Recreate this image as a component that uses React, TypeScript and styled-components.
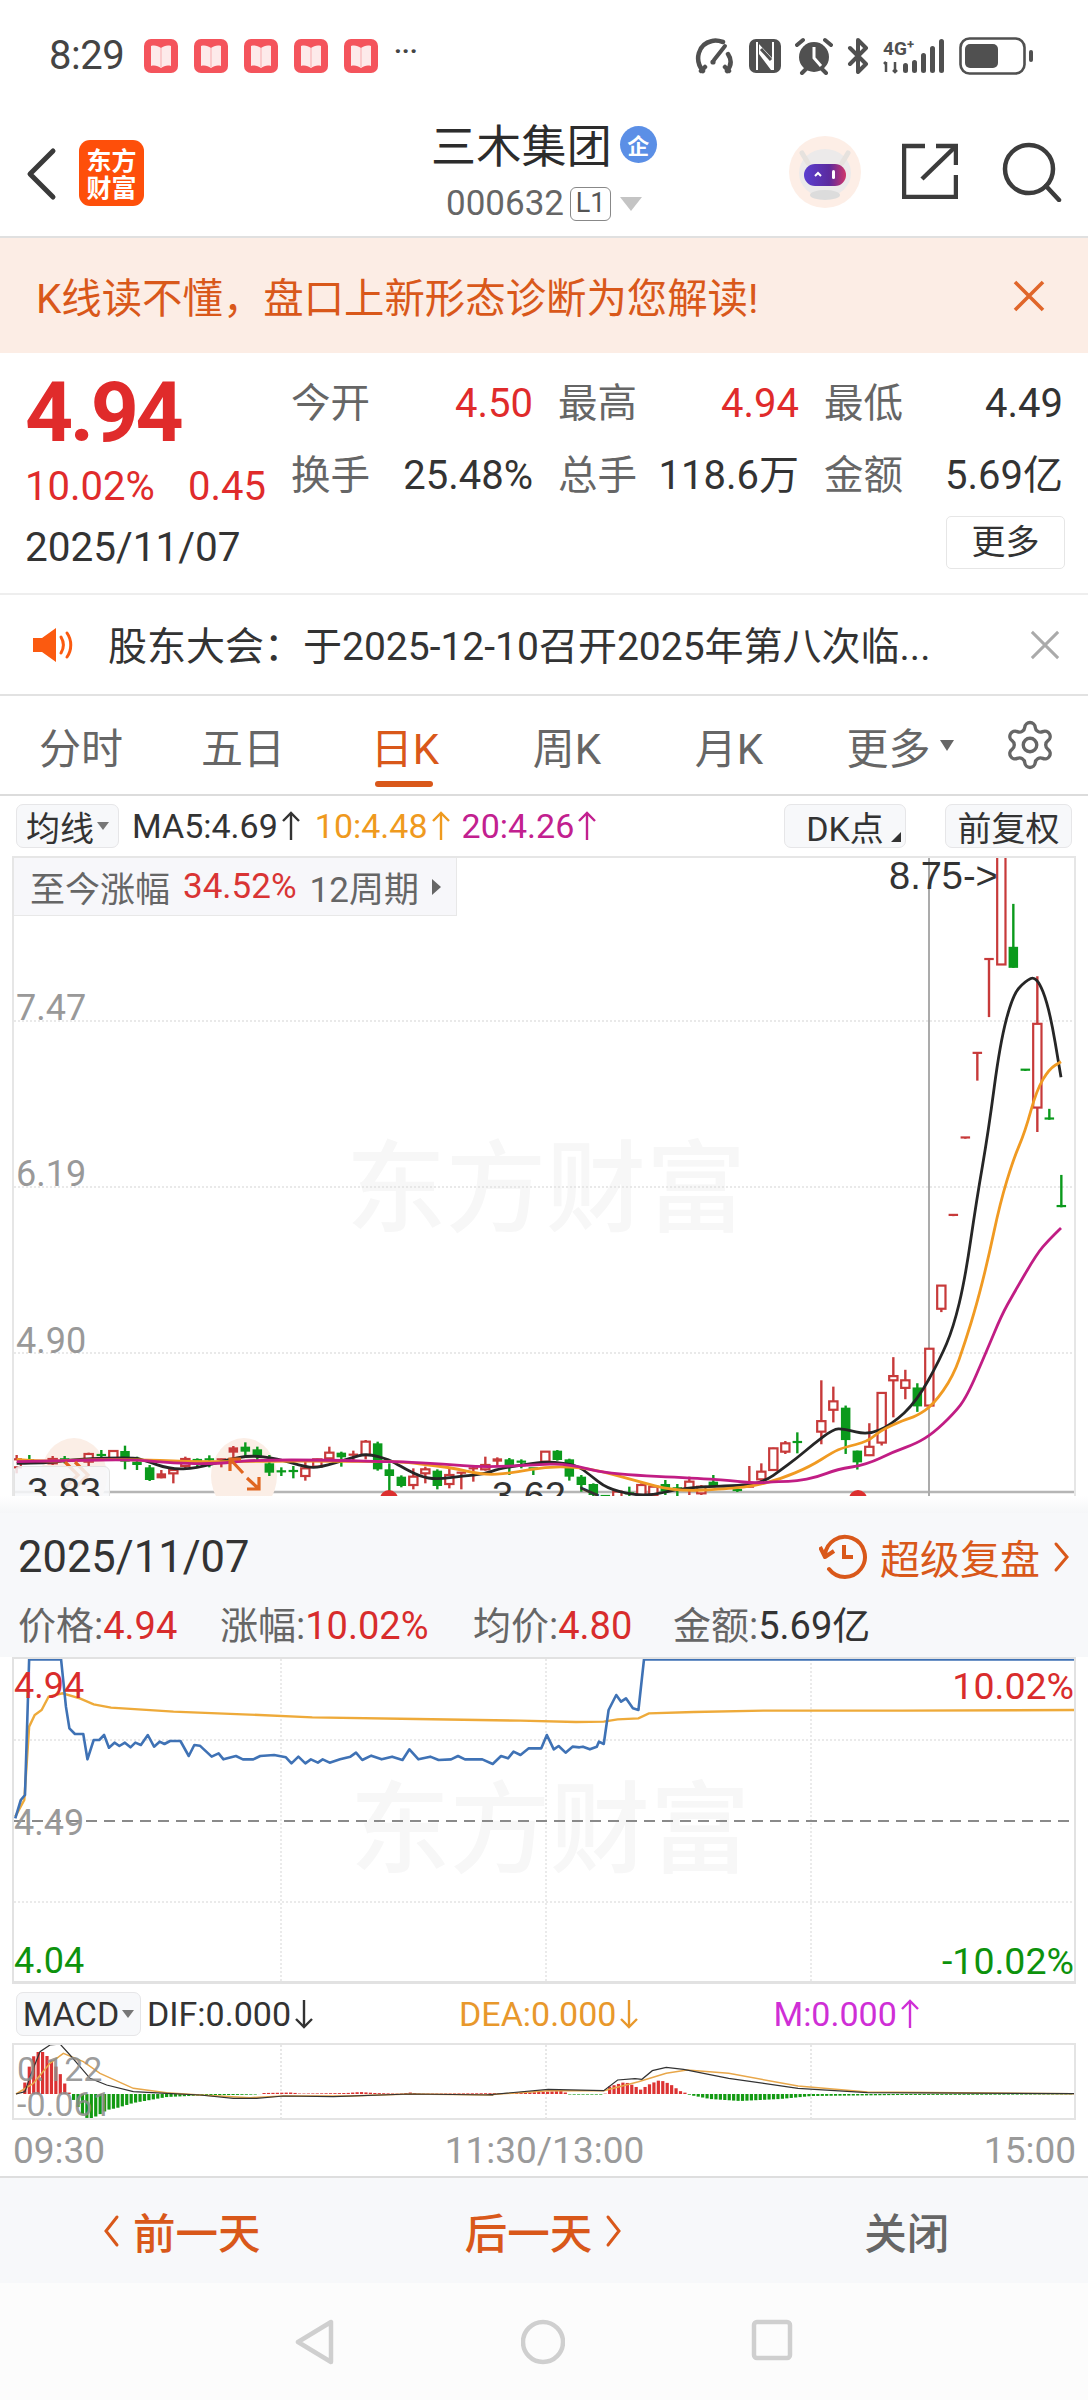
import React from "react";
import styled, { createGlobalStyle } from "styled-components";
import { Settings } from "lucide-react";

const FONT = `Roboto, "Noto Sans CJK SC", sans-serif`;
const RED = "#e02b2b";
const CANDLE_RED = "#c73a3a";
const CANDLE_GREEN = "#0b9a1c";
const ORANGE = "#d9581a";

const Global = createGlobalStyle`
  html, body { margin: 0; padding: 0; background: #fff; overflow: hidden; }
  body { font-family: ${FONT}; color: #333; }
  * { box-sizing: border-box; }
`;

const Page = styled.div`
  width: 1088px;
  height: 2400px;
  display: flex;
  flex-direction: column;
  overflow: hidden;
`;

/* status bar */
const StatusBar = styled.div`
  height: 110px;
  flex: none;
  display: flex;
  align-items: flex-start;
  padding: 36px 0 0 49px;
`;
const Clock = styled.span`
  font-size: 40px;
  line-height: 40px;
  color: #444;
  letter-spacing: -0.5px;
  width: 95px;
`;
const NoticeIcons = styled.div`
  display: flex;
  gap: 16px;
  margin-top: 3px;
`;
const Dots = styled.span`
  margin: 0 0 0 16px;
  font-size: 26px;
  line-height: 30px;
  color: #444;
  font-weight: 700;
  letter-spacing: 0;
`;
const StatusRight = styled.div`
  margin-left: auto;
  padding-right: 53px;
  display: flex;
  align-items: center;
  height: 40px;
  gap: 14px;
`;

/* nav */
const Nav = styled.div`
  height: 128px;
  flex: none;
  display: grid;
  grid-template-columns: 1fr auto 1fr;
  border-bottom: 2px solid #e0e0e0;
`;
const NavLeft = styled.div`
  display: flex;
  align-items: flex-start;
  padding: 30px 0 0 25px;
  gap: 22px;
`;
const Logo = styled.div`
  width: 65px;
  height: 66px;
  border-radius: 11px;
  background: #fe4f0a;
  color: #fff;
  font: 700 25px/27px "Noto Sans CJK SC", sans-serif;
  text-align: center;
  padding-top: 6px;
`;
const Title = styled.div`
  display: flex;
  flex-direction: column;
  align-items: center;
  padding-top: 12px;
`;
const TitleRow = styled.div`
  display: flex;
  align-items: center;
  font-size: 45px;
  line-height: 52px;
  color: #2c2c2c;
  gap: 8px;
  letter-spacing: 0.2px;
`;
const CorpBadge = styled.span`
  width: 37px;
  height: 37px;
  border-radius: 50%;
  background: #5b8fe6;
  color: #fff;
  font: 700 22px/37px "Noto Sans CJK SC", sans-serif;
  text-align: center;
  margin-top: -8px;
`;
const CodeRow = styled.div`
  display: flex;
  align-items: center;
  margin-top: 10px;
  font-size: 35px;
  line-height: 40px;
  color: #666;
`;
const LevelTag = styled.span`
  margin-left: 6px;
  width: 41px;
  height: 34px;
  border: 1.5px solid #888;
  border-radius: 6px;
  font-size: 27px;
  line-height: 30px;
  text-align: center;
  color: #555;
`;
const DownMark = styled.span`
  margin-left: 9px;
  width: 0;
  height: 0;
  border-left: 11px solid transparent;
  border-right: 11px solid transparent;
  border-top: 14px solid #c4c4c4;
`;
const NavRight = styled.div`
  display: flex;
  justify-content: flex-end;
  align-items: flex-start;
  padding: 25px 26px 0 0;
  gap: 41px;
`;

/* banner */
const Banner = styled.div`
  height: 115px;
  flex: none;
  background: #fcede5;
  display: flex;
  align-items: center;
  justify-content: space-between;
  padding: 0 43px 0 36px;
  color: ${ORANGE};
  font-size: 40.4px;
`;

/* quote */
const Quote = styled.div`
  height: 242px;
  flex: none;
  display: flex;
  padding: 0 23px 0 25px;
  border-bottom: 2px solid #eee;
`;
const QuoteLeft = styled.div`
  width: 266px;
  flex: none;
  display: flex;
  flex-direction: column;
`;
const BigPrice = styled.div`
  font-size: 84px;
  font-weight: 700;
  line-height: 84px;
  margin-top: 18px;
  color: ${RED};
  letter-spacing: -3.4px;
`;
const Changes = styled.div`
  display: flex;
  justify-content: space-between;
  width: 241px;
  margin-top: 10px;
  font-size: 40px;
  line-height: 44px;
  color: ${RED};
`;
const QuoteDate = styled.div`
  font-size: 40.5px;
  line-height: 44px;
  margin-top: 16px;
  color: #333;
`;
const QuoteRight = styled.div`
  flex: 1;
  display: flex;
  flex-direction: column;
`;
const StatGrid = styled.div`
  margin-top: 29px;
  display: grid;
  grid-template-columns: 242px 241px 239px;
  column-gap: 25px;
  row-gap: 28px;
`;
const Stat = styled.div`
  display: flex;
  justify-content: space-between;
  font-size: 40px;
  line-height: 44px;
`;
const StatLabel = styled.span`
  color: #666;
  font-size: 39.5px;
`;
const StatValue = styled.span<{ $red?: boolean }>`
  color: ${(p) => (p.$red ? RED : "#333")};
`;
const MoreButton = styled.div`
  align-self: flex-end;
  margin-top: 18px;
  width: 119px;
  height: 53px;
  border: 1.5px solid #e6e6e6;
  border-radius: 5px;
  font-size: 34px;
  line-height: 50px;
  text-align: center;
  color: #333;
`;

/* notice */
const Notice = styled.div`
  height: 101px;
  flex: none;
  display: flex;
  align-items: center;
  padding: 0 28px 0 32px;
  border-bottom: 2px solid #e2e2e2;
  font-size: 39px;
  color: #333;
`;
const NoticeText = styled.span`
  margin-left: 32px;
  flex: 1;
  white-space: nowrap;
  margin-top: -4px;
`;

/* tabs */
const Tabs = styled.div`
  height: 100px;
  flex: none;
  display: grid;
  grid-template-columns: repeat(6, 162px) 1fr;
  border-bottom: 2px solid #dcdcdc;
`;
const Tab = styled.div<{ $active?: boolean; $shift?: number }>`
  position: relative;
  display: flex;
  align-items: center;
  justify-content: center;
  gap: 9px;
  font-size: 42px;
  padding-left: ${(p) => p.$shift ?? 0}px;
  color: ${(p) => (p.$active ? ORANGE : "#666")};
  &::after {
    content: "";
    display: ${(p) => (p.$active ? "block" : "none")};
    position: absolute;
    left: 50%;
    bottom: 7px;
    width: 58px;
    height: 6px;
    margin-left: -30px;
    border-radius: 3px;
    background: ${ORANGE};
  }
`;
const TabMark = styled.i`
  width: 0;
  height: 0;
  border-left: 7px solid transparent;
  border-right: 7px solid transparent;
  border-top: 11px solid #666;
`;
const GearCell = styled.div`
  display: flex;
  align-items: center;
  justify-content: center;
  color: #666;
`;

/* ma toolbar */
const Toolbar = styled.div`
  height: 60px;
  flex: none;
  display: flex;
  align-items: center;
  padding: 0 16px;
  font-size: 34px;
`;
const ToolButton = styled.div<{ $w: number; $auto?: boolean; $ml?: number }>`
  width: ${(p) => p.$w}px;
  margin-left: ${(p) => (p.$auto ? "auto" : `${p.$ml ?? 0}px`)};
  height: 44px;
  flex: none;
  display: flex;
  align-items: center;
  justify-content: center;
  gap: 3px;
  background: #f7f8fa;
  border: 1.5px solid #e6e6e8;
  border-radius: 7px;
  font-size: 34px;
  color: #333;
  position: relative;
`;
const SmallDown = styled.i`
  width: 0;
  height: 0;
  border-left: 6px solid transparent;
  border-right: 6px solid transparent;
  border-top: 8px solid #777;
`;
const CornerMark = styled.i`
  position: absolute;
  right: 4px;
  bottom: 5px;
  width: 0;
  height: 0;
  border-left: 10px solid transparent;
  border-bottom: 10px solid #333;
`;
const Legend = styled.span<{ $c: string; $ml: number }>`
  display: inline-flex;
  align-items: center;
  gap: 3px;
  color: ${(p) => p.$c};
  margin-left: ${(p) => p.$ml}px;
  white-space: nowrap;
`;

/* kline */
const KFrame = styled.div`
  margin-left: 12px;
  width: 1064px;
  height: 640px;
  flex: none;
  position: relative;
  overflow: hidden;
  border-top: 2px solid #e6e6e6;
  border-left: 2px solid #e6e6e6;
  border-right: 2px solid #e6e6e6;
`;
const FullSvg = styled.svg`
  position: absolute;
  left: 0;
  top: 0;
  display: block;
`;
const RangeTip = styled.div`
  position: absolute;
  left: 0;
  top: 0;
  width: 443px;
  height: 58px;
  background: #f7f7fa;
  border-right: 1.5px solid #e8e8e8;
  border-bottom: 1.5px solid #e8e8e8;
  display: flex;
  align-items: center;
  padding-left: 16px;
  font-size: 35px;
  color: #666;
  gap: 13px;
`;
const TipRed = styled.span`
  color: #d93434;
`;
const TipMark = styled.i`
  width: 0;
  height: 0;
  border-top: 8px solid transparent;
  border-bottom: 8px solid transparent;
  border-left: 9px solid #666;
`;
const AxisLabel = styled.span<{ $y: number }>`
  position: absolute;
  left: 2px;
  top: ${(p) => p.$y}px;
  font-size: 36px;
  line-height: 40px;
  color: #999;
`;
const ChartMark = styled.span<{ $x: number; $y: number }>`
  position: absolute;
  left: ${(p) => p.$x}px;
  top: ${(p) => p.$y}px;
  font-family: "Liberation Sans", sans-serif;
  font-size: 38px;
  line-height: 40px;
  color: #333;
  white-space: nowrap;
`;
const LowBox = styled.div`
  position: absolute;
  left: 0;
  top: 608px;
  width: 96px;
  height: 50px;
  background: rgba(247, 248, 250, 0.85);
  border: 1.5px solid #e4e4e4;
  border-radius: 6px;
`;
const Watermark = styled.div<{ $x: number; $y: number }>`
  position: absolute;
  left: ${(p) => p.$x}px;
  top: ${(p) => p.$y}px;
  font: 500 100px/110px "Noto Sans CJK SC", sans-serif;
  color: #f7f7f7;
  white-space: nowrap;
`;

const Fade = styled.div`
  height: 17px;
  flex: none;
  background: linear-gradient(#ffffff, #f5f6f8);
`;

/* review head */
const Review = styled.div`
  height: 144px;
  flex: none;
  background: #f7f8fa;
  padding: 0 18px;
  display: flex;
  flex-direction: column;
`;
const ReviewTop = styled.div`
  height: 88px;
  display: flex;
  align-items: center;
  justify-content: space-between;
  flex: none;
`;
const ReviewDate = styled.span`
  font-size: 43.5px;
  color: #333;
`;
const ReviewLink = styled.span`
  display: flex;
  align-items: center;
  gap: 13px;
  font-size: 40px;
  color: ${ORANGE};
`;
const ReviewStats = styled.div`
  display: flex;
  font-size: 38px;
  line-height: 50px;
  color: #666;
`;
const ReviewItem = styled.span<{ $w: number }>`
  width: ${(p) => p.$w}px;
  flex: none;
  white-space: nowrap;
`;
const ReviewRed = styled.span`
  color: #d82c2c;
`;
const ReviewDark = styled.span`
  color: #333;
`;

/* intraday */
const DayFrame = styled.div`
  margin-left: 12px;
  width: 1064px;
  height: 327px;
  flex: none;
  position: relative;
  border: 2px solid #e2e2e2;
  border-bottom-width: 3px;
`;
const DayLabel = styled.span<{ $c: string; $y: number; $right?: boolean }>`
  position: absolute;
  ${(p) => (p.$right ? "right: 0" : "left: 0")};
  top: ${(p) => p.$y}px;
  font-size: ${(p) => (p.$right ? 37.5 : 36)}px;
  line-height: 40px;
  color: ${(p) => p.$c};
`;

/* macd */
const MacdBar = styled.div`
  height: 59px;
  flex: none;
  display: flex;
  align-items: center;
  padding-left: 16px;
  font-size: 34px;
`;
const MacdFrame = styled.div`
  margin-left: 12px;
  width: 1064px;
  height: 77px;
  flex: none;
  position: relative;
  overflow: hidden;
  border: 2px solid #e4e4e4;
`;
const MacdLabel = styled.span<{ $y: number }>`
  position: absolute;
  left: 3px;
  top: ${(p) => p.$y}px;
  font-size: 34px;
  line-height: 36px;
  color: rgba(140, 140, 140, 0.85);
`;
const TimeRow = styled.div`
  height: 58px;
  flex: none;
  display: flex;
  justify-content: space-between;
  align-items: center;
  padding: 4px 12px 0 13px;
  font-size: 37px;
  color: #9a9a9a;
  border-bottom: 2px solid #dedede;
`;

/* actions */
const Actions = styled.div`
  height: 105px;
  flex: none;
  background: #f7f8fa;
  display: grid;
  grid-template-columns: repeat(3, 1fr);
`;
const Action = styled.div<{ $c: string }>`
  display: flex;
  align-items: center;
  justify-content: center;
  gap: 13px;
  font-size: 42.5px;
  font-weight: 500;
  color: ${(p) => p.$c};
`;

/* system nav */
const SysNav = styled.div`
  flex: 1;
  background: #fcfcfc;
  display: flex;
  justify-content: center;
  align-items: flex-start;
  padding: 36px 0 0 0;
  gap: 186px;
`;

/* ---------- data ---------- */
type P = [number, number];
const z3 = (x: number, y: number): P => [780 + x / 3, 850 + y / 2.376];
const z7 = (x: number, y: number): P => [x / 3, 1380 + y / 3];
const z8 = (x: number, y: number): P => [400 + x / 3, 1380 + y / 3];
const z5 = (x: number, y: number): P => [x / 1.441, 1520 + y / 3];
const z6 = (x: number, y: number): P => [x / 1.441, 1980 + y / 3];
const z10 = (x: number, y: number): P => [x / 3, 2020 + y / 3];

const map = (f: (x: number, y: number) => P, a: number[][]) => a.map(([x, y]) => f(x, y));
const smooth = (pts: P[]) => {
  let d = `M${pts[0][0]} ${pts[0][1]}`;
  for (let i = 1; i < pts.length - 1; i++) {
    const mx = (pts[i][0] + pts[i + 1][0]) / 2;
    const my = (pts[i][1] + pts[i + 1][1]) / 2;
    d += `Q${pts[i][0]} ${pts[i][1]} ${mx} ${my}`;
  }
  const l = pts[pts.length - 1];
  return d + `L${l[0]} ${l[1]}`;
};
const poly = (pts: P[]) => pts.map((p) => p.join(",")).join(" ");

const blackLine = [
  ...map(z7, [[50,250],[140,250],[230,237],[400,232],[430,240],[510,268],[590,265],[680,240],[750,226],[830,235],[920,262],[960,262],[1050,235],[1100,220],[1170,240]]),
  ...map(z8, [[0,258],[60,290],[110,298],[190,288],[250,283],[300,265],[400,250],[450,245],[530,255],[570,285],[620,325],[700,345],[760,345],[820,330],[900,320],[1000,318],[1060,312],[1100,300]]),
  ...map(z3, [[0,1475],[50,1445],[100,1412],[160,1376],[190,1375],[265,1390],[335,1365],[410,1310],[480,1210],[520,1135],[555,1020],[590,830],[625,670],[660,460],[698,345],[735,312],[770,299],[808,375],[843,540]]),
];
const orangeLine = [
  ...map(z7, [[50,238],[130,245],[230,240],[400,238],[560,245],[700,245],[900,243],[1150,245]]),
  ...map(z8, [[0,245],[150,262],[250,285],[330,280],[450,258],[570,265],[700,300],[830,335],[1000,325],[1060,318]]),
  ...map(z3, [[0,1495],[90,1465],[160,1430],[190,1420],[265,1405],[300,1380],[370,1355],[410,1345],[460,1318],[520,1250],[555,1170],[590,1080],[625,970],[660,840],[700,735],[735,670],[770,570],[808,520],[843,503]]),
];
const magentaLine = [
  ...map(z7, [[50,245],[200,242],[400,238],[520,250],[650,252],[750,240],[1000,240],[1150,245]]),
  ...map(z8, [[0,245],[130,252],[250,262],[400,255],[500,250],[620,282],[860,293],[1000,302],[1060,310]]),
  ...map(z3, [[0,1500],[50,1500],[110,1490],[170,1472],[260,1460],[340,1430],[410,1410],[460,1385],[520,1340],[560,1300],[620,1190],[665,1105],[700,1055],[770,960],[808,925],[843,898]]),
];

type C = [number, number, number, number, number, string];
const c7: C[] = [
  [50,238,262,225,280,"r"],[88,238,246,225,250,"g"],[158,237,250,228,255,"r"],[194,238,242,228,250,"g"],
  [266,222,245,218,260,"r"],[304,225,229,210,236,"g"],[340,213,235,210,240,"r"],[375,213,245,197,268,"g"],
  [411,245,255,230,270,"g"],[449,262,300,255,303,"g"],[484,280,295,270,295,"R"],[520,270,280,265,310,"r"],
  [556,237,258,230,265,"r"],[592,240,243,235,262,"g"],[628,238,241,226,262,"g"],[664,238,243,236,262,"r"],
  [700,202,218,198,240,"R"],[736,200,215,187,228,"g"],[772,208,228,200,240,"g"],[808,250,278,225,288,"g"],
  [844,274,278,262,288,"g"],[880,273,278,258,295,"g"],[916,265,288,240,302,"r"],[952,238,260,236,262,"r"],
  [988,218,235,200,238,"r"],[1024,218,232,215,260,"g"],[1060,224,228,212,240,"r"],[1097,185,225,180,238,"r"],
  [1133,190,268,185,272,"g"],[1168,268,288,250,335,"g"],
];
const c8: C[] = [
  [4,290,318,286,322,"g"],[40,290,315,265,328,"r"],[76,268,280,260,310,"r"],[112,272,318,268,328,"g"],
  [148,285,312,262,325,"r"],[184,278,282,278,328,"R"],[220,265,270,255,305,"R"],[256,255,268,230,272,"r"],
  [292,235,245,232,258,"R"],[328,238,255,234,285,"g"],[364,245,248,238,265,"g"],[400,265,268,265,285,"g"],
  [436,215,245,213,248,"r"],[472,212,240,210,242,"g"],[508,238,290,236,302,"g"],[544,290,315,285,335,"g"],
  [580,312,345,310,350,"g"],[616,348,350,346,352,"g"],[652,335,352,330,352,"r"],[688,340,345,320,352,"g"],
  [724,315,345,310,350,"r"],[760,320,345,315,350,"r"],[796,312,335,300,345,"g"],[832,325,328,312,350,"g"],
  [868,305,325,290,345,"r"],[904,320,340,315,345,"r"],[940,305,318,285,320,"g"],[1012,330,333,325,336,"g"],
  [1048,320,323,258,322,"R"],[1084,275,298,250,310,"r"],[1120,205,270,203,272,"r"],[1156,190,215,183,222,"r"],
  [1192,186,188,157,220,"g"],
];
const kLines: C[] = [
  [124,1357,1382,1260,1412,"r"],[160,1310,1330,1275,1360,"r"],[197,1325,1402,1320,1435,"g"],[232,1427,1455,1427,1472,"g"],
  [268,1418,1438,1362,1440,"r"],[305,1290,1408,1288,1415,"r"],[340,1250,1260,1205,1348,"r"],[376,1260,1278,1235,1305,"r"],
  [412,1277,1322,1267,1335,"g"],[448,1185,1320,1185,1320,"r"],[484,1035,1090,1035,1098,"r"],[520,867,870,867,870,"R"],
  [556,683,686,683,686,"R"],[592,482,484,482,548,"R"],[627,259,261,259,397,"R"],[664,5,272,5,272,"r"],
  [700,230,280,128,280,"g"],[736,522,525,522,525,"g"],[772,413,612,300,670,"r"],[808,638,641,615,641,"g"],
  [844,846,849,772,849,"g"],
];

const Candle = ({ x, t, b, wt, wb, k, w = 9.5 }: { x: number; t: number; b: number; wt: number; wb: number; k: string; w?: number }) => {
  const green = k === "g";
  const col = green ? CANDLE_GREEN : CANDLE_RED;
  const thin = b - t < 2.2;
  return (
    <g>
      <line x1={x} x2={x} y1={wt} y2={wb} stroke={col} strokeWidth={2.4} />
      {thin ? (
        <line x1={x - w / 2} x2={x + w / 2} y1={t} y2={t} stroke={col} strokeWidth={2.2} />
      ) : (
        <rect
          x={x - w / 2 + (k === "r" ? 0.6 : 0)}
          y={t}
          width={w - (k === "r" ? 1.2 : 0)}
          height={b - t}
          fill={k === "r" ? "#fff" : col}
          stroke={k === "r" ? col : "none"}
          strokeWidth={k === "r" ? 2.2 : 0}
        />
      )}
    </g>
  );
};
const mk = (f: (x: number, y: number) => P, list: C[], i: number) =>
  list.map(([zx, t, b, wt, wb, k]) => (
    <Candle key={`${i}-${zx}`} x={f(zx, 0)[0]} t={f(0, t)[1]} b={f(0, b)[1]} wt={f(0, wt)[1]} wb={f(0, wb)[1]} k={k} />
  ));

const blueLine = map(z5, [[22,895],[30,840],[36,825],[42,418],[88,418],[95,560],[100,625],[108,642],[120,642],[126,718],[135,660],[143,660],[150,645],[157,683],[165,668],[172,678],[180,668],[188,682],[195,668],[203,675],[213,645],[222,680],[230,665],[237,672],[245,663],[260,663],[272,708],[280,675],[288,677],[305,710],[315,700],[322,718],[340,708],[350,718],[365,718],[375,708],[395,705],[412,712],[420,730],[430,710],[440,730],[448,718],[458,728],[465,718],[475,728],[490,718],[505,710],[513,698],[522,720],[535,707],[550,718],[565,710],[580,720],[590,688],[603,718],[620,710],[632,720],[650,718],[660,708],[670,718],[695,718],[710,732],[722,708],[732,715],[740,695],[750,705],[762,685],[780,685],[788,645],[798,688],[805,678],[815,698],[825,680],[835,682],[840,680],[850,688],[860,680],[863,665],[870,672],[877,570],[888,525],[895,545],[902,535],[912,565],[920,570],[928,418],[1550,418]]);
const avgLine = map(z5, [[22,890],[35,840],[42,620],[50,585],[60,570],[70,530],[90,520],[115,535],[135,553],[160,563],[250,575],[350,583],[450,592],[600,597],[750,602],[830,606],[870,605],[890,598],[920,595],[935,580],[1000,576],[1100,572],[1300,572],[1550,570]]);

const macdEnv: P[] = [
  [22,0],[28,24],[33,37],[38,42],[43,42],[48,37],[53,32],[58,24],[63,15],[68,2],[72,0],
  [73,-5],[78,-13],[83,-21],[87,-24],[92,-24],[97,-22],[107,-16],[117,-14],[133,-9],[150,-6],[167,-3],[200,-1.5],[233,-1],[257,-0.5],
  [260,0],[264,1],[292,1.5],[300,0.4],[347,1],[360,2],[375,1],[400,0.3],[410,1.5],[420,0.3],[514,1],[540,2],[562,3],[568,0.3],
  [570,-0.6],[604,-0.6],[606,1],[608,7],[625,12],[635,8],[640,4],[650,10],[660,14],[670,10],[680,3],[686,1],
  [690,-1],[710,-5],[740,-7],[780,-5],[812,-2],[900,-1],[1074,-0.4],
];
const envAt = (x: number) => {
  for (let i = 0; i < macdEnv.length - 1; i++) {
    const [a, va] = macdEnv[i];
    const [b, vb] = macdEnv[i + 1];
    if (x >= a && x <= b) return va + ((vb - va) * (x - a)) / (b - a);
  }
  return 0;
};
const macdBars = Array.from({ length: 240 }, (_, i) => {
  const x = 16 + i * 4.43;
  return { x, v: envAt(x) };
});
const macdBlack = [
  ...map(z10, [[48,222],[75,215],[90,170],[120,95],[150,75],[180,72],[210,105],[240,140],[270,175],[320,195],[400,215],[500,220],[600,225],[700,235],[770,235],[850,228],[1000,230],[1230,222],[1480,225]]),
  ...map(z6, [[700,345],[790,328],[870,332],[890,300],[915,296],[925,298],[940,272],[960,262],[985,268],[1050,295],[1150,325],[1250,338],[1550,341]]),
];
const macdOrange = [
  ...map(z10, [[48,222],[100,190],[150,130],[190,100],[250,125],[300,160],[400,205],[500,218],[600,225],[750,233],[850,228],[1050,228],[1230,222],[1480,225]]),
  ...map(z6, [[700,345],[790,332],[870,332],[920,305],[960,280],[990,270],[1050,280],[1150,318],[1250,336],[1550,341]]),
];

/* ---------- small drawings ---------- */
const BookIcon = () => (
  <svg width="34" height="34" viewBox="0 0 34 34">
    <rect width="34" height="34" rx="7" fill="#f4545c" />
    <path d="M7 7c4-1 7 0 10 2 3-2 6-3 10-2v20c-4-1-7 0-10 2-3-2-6-3-10-2z" fill="#fdeaea" />
    <path d="M17 9v20" stroke="#f9c0c2" strokeWidth="1.5" />
  </svg>
);
const Arrow = ({ c, down }: { c: string; down?: boolean }) => (
  <svg width="20" height="32" viewBox="0 0 20 32">
    <g fill="none" stroke={c} strokeWidth="2.4" transform={down ? "rotate(180 10 16)" : undefined}>
      <path d="M10 3v27" />
      <path d="M2 11l8-8 8 8" />
    </g>
  </svg>
);
const Cross = ({ c, size, w }: { c: string; size: number; w: number }) => (
  <svg width={size} height={size} viewBox="0 0 32 32">
    <path d="M2 2l28 28M30 2L2 30" stroke={c} strokeWidth={w} fill="none" />
  </svg>
);

export default function App() {
  const gw = 1064;
  return (
    <Page>
      <Global />
      <StatusBar>
        <Clock>8:29</Clock>
        <NoticeIcons>
          <BookIcon /><BookIcon /><BookIcon /><BookIcon /><BookIcon />
        </NoticeIcons>
        <Dots>···</Dots>
        <StatusRight>
          <svg width="40" height="36" viewBox="0 0 40 36" fill="none" stroke="#505050" strokeWidth="4.5" strokeLinecap="round">
            <path d="M8 33C-1 22 3 6 17 3c4-1 8 0 11 1" />
            <path d="M33 16c4 6 3 12-1 17" />
            <path d="M6 33l4-4M34 33l-4-4" />
            <path d="M19 22L30 8" strokeWidth="4" />
            <circle cx="18" cy="24" r="2.6" fill="#505050" stroke="none" />
          </svg>
          <svg width="32" height="34" viewBox="0 0 32 34">
            <rect width="32" height="34" rx="7" fill="#505050" />
            <path d="M8 3v28" stroke="#fff" strokeWidth="2" />
            <path d="M10 5l13 14v-16h2v28h-3L10 15z" fill="#fff" />
            <path d="M12 10l10 11" stroke="#505050" strokeWidth="3" />
          </svg>
          <svg width="38" height="38" viewBox="0 0 38 38">
            <circle cx="19" cy="20" r="15" fill="#505050" />
            <path d="M19 10v11l7 8" stroke="#fff" strokeWidth="3" fill="none" />
            <path d="M2 8l6-5M36 8l-6-5M7 36l4-4M31 36l-4-4" stroke="#505050" strokeWidth="4" strokeLinecap="round" />
          </svg>
          <svg width="22" height="36" viewBox="0 0 22 36" fill="none" stroke="#505050" strokeWidth="4" strokeLinejoin="round" strokeLinecap="round">
            <path d="M3 10l16 16-8 8V2l8 8L3 26" />
          </svg>
          <svg width="64" height="36" viewBox="0 0 64 36">
            <text x="0" y="17" fontFamily="Roboto, sans-serif" fontSize="19" fontWeight="700" fill="#505050">4G</text>
            <text x="24" y="11" fontFamily="Roboto, sans-serif" fontSize="13" fontWeight="700" fill="#505050">+</text>
            <path d="M3 24v10M1 26l2-2M12 24v10M10 32l2 2 2-2" stroke="#505050" strokeWidth="2.5" fill="none" />
            <g fill="#505050">
              <rect x="20" y="25" width="5" height="10" rx="2.5" />
              <rect x="29" y="22" width="5" height="13" rx="2.5" />
              <rect x="38" y="15" width="5" height="20" rx="2.5" />
              <rect x="47" y="8" width="5" height="27" rx="2.5" />
              <rect x="56" y="1" width="5" height="34" rx="2.5" />
            </g>
          </svg>
          <svg width="76" height="38" viewBox="0 0 76 38" style={{ marginLeft: -2 }}>
            <rect x="1.5" y="1.5" width="64" height="35" rx="9" fill="none" stroke="#505050" strokeWidth="2.6" />
            <rect x="6" y="7" width="33" height="24" rx="5" fill="#505050" />
            <rect x="70" y="13" width="4" height="12" rx="2" fill="#505050" />
          </svg>
        </StatusRight>
      </StatusBar>

      <Nav>
        <NavLeft>
          <svg width="32" height="54" viewBox="0 0 32 54" style={{ marginTop: 7 }}>
            <path d="M28 4L5 27l23 23" fill="none" stroke="#3a3a3a" strokeWidth="5" strokeLinecap="round" strokeLinejoin="round" />
          </svg>
          <Logo>东方<br />财富</Logo>
        </NavLeft>
        <Title>
          <TitleRow>三木集团<CorpBadge>企</CorpBadge></TitleRow>
          <CodeRow>000632<LevelTag>L1</LevelTag><DownMark /></CodeRow>
        </Title>
        <NavRight>
          <svg width="74" height="74" viewBox="0 0 74 74" style={{ marginRight: -1 }}>
            <defs>
              <linearGradient id="visor" x1="0" x2="1">
                <stop offset="0" stopColor="#5a3fd0" />
                <stop offset="0.6" stopColor="#5b2a9e" />
                <stop offset="1" stopColor="#d0366a" />
              </linearGradient>
            </defs>
            <circle cx="37" cy="37" r="36" fill="#fdeee6" />
            <ellipse cx="37" cy="38" rx="26" ry="24" fill="#eceaea" />
            <path d="M14 18l6 10M60 18l-6 10" stroke="#e6e2de" strokeWidth="5" strokeLinecap="round" />
            <rect x="16" y="29" width="42" height="22" rx="11" fill="url(#visor)" />
            <path d="M27 41l3-3 3 3" stroke="#fff" strokeWidth="2" fill="none" />
            <rect x="44" y="35" width="3" height="9" rx="1.5" fill="#fff" />
            <ellipse cx="37" cy="60" rx="15" ry="5" fill="#dcdcdc" />
          </svg>
          <svg width="56" height="56" viewBox="0 0 56 56" fill="none" stroke="#3c3c3c" strokeWidth="4.5" style={{ marginTop: 8 }}>
            <path d="M23 3H2v51h52V32" />
            <path d="M20 36L52 5" />
            <path d="M34 3h20v19" />
          </svg>
          <svg width="60" height="60" viewBox="0 0 60 60" fill="none" stroke="#3c3c3c" strokeWidth="4.5" style={{ marginTop: 7, marginLeft: 3 }}>
            <circle cx="27" cy="27" r="24" />
            <path d="M44 44l13 14" strokeLinecap="round" />
          </svg>
        </NavRight>
      </Nav>

      <Banner>
        <span>K线读不懂，盘口上新形态诊断为您解读!</span>
        <Cross c="#e0662a" size={32} w={3.6} />
      </Banner>

      <Quote>
        <QuoteLeft>
          <BigPrice>4.94</BigPrice>
          <Changes><span>10.02%</span><span>0.45</span></Changes>
          <QuoteDate>2025/11/07</QuoteDate>
        </QuoteLeft>
        <QuoteRight>
          <StatGrid>
            <Stat><StatLabel>今开</StatLabel><StatValue $red>4.50</StatValue></Stat>
            <Stat><StatLabel>最高</StatLabel><StatValue $red>4.94</StatValue></Stat>
            <Stat><StatLabel>最低</StatLabel><StatValue>4.49</StatValue></Stat>
            <Stat><StatLabel>换手</StatLabel><StatValue>25.48%</StatValue></Stat>
            <Stat><StatLabel>总手</StatLabel><StatValue>118.6万</StatValue></Stat>
            <Stat><StatLabel>金额</StatLabel><StatValue>5.69亿</StatValue></Stat>
          </StatGrid>
          <MoreButton>更多</MoreButton>
        </QuoteRight>
      </Quote>

      <Notice>
        <svg width="44" height="36" viewBox="0 0 44 36">
          <path d="M1 11h9L24 1v34L10 25H1z" fill="#fb5a10" />
          <path d="M29 10c3 5 3 11 0 16M35 6c5 7 5 17 0 24" fill="none" stroke="#fb5a10" strokeWidth="3" strokeLinecap="round" />
        </svg>
        <NoticeText>股东大会：于2025-12-10召开2025年第八次临...</NoticeText>
        <Cross c="#aaaaaa" size={30} w={3.2} />
      </Notice>

      <Tabs>
        <Tab>分时</Tab>
        <Tab>五日</Tab>
        <Tab $active>日K</Tab>
        <Tab>周K</Tab>
        <Tab>月K</Tab>
        <Tab $shift={18}>更多<TabMark /></Tab>
        <GearCell>
          <Settings size={54} strokeWidth={1.5} />
        </GearCell>
      </Tabs>

      <Toolbar>
        <ToolButton $w={103}>均线<SmallDown /></ToolButton>
        <Legend $c="#333" $ml={13}>MA5:4.69<Arrow c="#333" /></Legend>
        <Legend $c="#ef9a1e" $ml={14}>10:4.48<Arrow c="#ef9a1e" /></Legend>
        <Legend $c="#c2208f" $ml={11}>20:4.26<Arrow c="#c2208f" /></Legend>
        <ToolButton $w={122} $auto>DK点<CornerMark /></ToolButton>
        <ToolButton $w={127} $ml={39}>前复权</ToolButton>
      </Toolbar>

      <KFrame>
        <Watermark $x={332} $y={268}>东方财富</Watermark>
        <FullSvg width={1060} height={640} viewBox="14 858 1060 640">
          <g stroke="#e2e2e2" strokeWidth="1.5" strokeDasharray="2 2">
            <line x1="14" x2="1074" y1="1021" y2="1021" />
            <line x1="14" x2="1074" y1="1187" y2="1187" />
            <line x1="14" x2="1074" y1="1353" y2="1353" />
          </g>
          <line x1="14" x2="1074" y1="1492" y2="1492" stroke="#b5b5b5" strokeWidth="2.5" />
          <line x1="929" x2="929" y1="856" y2="1498" stroke="#ababab" strokeWidth="2" />
          <ellipse cx="74" cy="1476" rx="33" ry="38" fill="#fbeee6" />
          <ellipse cx="244" cy="1476" rx="33" ry="38" fill="#fbeee6" />
          {mk(z7, c7, 7)}
          {mk(z8, c8, 8)}
          {mk(z3, kLines, 3)}
          <circle cx="389" cy="1499" r="9" fill="#dc2f2f" />
          <circle cx="858" cy="1499" r="9" fill="#dc2f2f" />
          <path d={smooth(blackLine)} fill="none" stroke="#262626" strokeWidth="2.8" />
          <path d={smooth(orangeLine)} fill="none" stroke="#f09a22" strokeWidth="2.8" />
          <path d={smooth(magentaLine)} fill="none" stroke="#c11d84" strokeWidth="2.8" />
          <g fill="none" stroke="#e0651f" strokeWidth="3.2">
            <path d="M65 1462l13 13-15 15M75 1462l13 13-15 15" />
            <path d="M243 1473l-13-14M230 1471v-12h11M247 1478l12 11M259 1477v12h-12" />
          </g>
        </FullSvg>
        <RangeTip>
          <span>至今涨幅</span>
          <TipRed>34.52%</TipRed>
          <span>12周期</span>
          <TipMark />
        </RangeTip>
        <AxisLabel $y={130}>7.47</AxisLabel>
        <AxisLabel $y={296}>6.19</AxisLabel>
        <AxisLabel $y={463}>4.90</AxisLabel>
        <ChartMark $x={875} $y={-2}>8.75{"->"}</ChartMark>
        <LowBox />
        <ChartMark $x={13} $y={614}>3.83</ChartMark>
        <ChartMark $x={478} $y={618}>3.62{"->"}</ChartMark>
      </KFrame>
      <Fade />

      <Review>
        <ReviewTop>
          <ReviewDate>2025/11/07</ReviewDate>
          <ReviewLink>
            <svg width="48" height="48" viewBox="0 0 48 48" fill="none" stroke="#d9581a" strokeWidth="4">
              <path d="M6 22A20 20 0 1 1 10 36" strokeLinecap="round" />
              <path d="M1 14l5 10 9-6" strokeLinejoin="round" />
              <path d="M25 12v12h9" />
            </svg>
            <span>超级复盘</span>
            <svg width="17" height="32" viewBox="0 0 17 32" fill="none" stroke="#d9581a" strokeWidth="3" strokeLinecap="round">
              <path d="M3 3l11 13L3 29" />
            </svg>
          </ReviewLink>
        </ReviewTop>
        <ReviewStats>
          <ReviewItem $w={202}>价格:<ReviewRed>4.94</ReviewRed></ReviewItem>
          <ReviewItem $w={253}>涨幅:<ReviewRed>10.02%</ReviewRed></ReviewItem>
          <ReviewItem $w={200}>均价:<ReviewRed>4.80</ReviewRed></ReviewItem>
          <ReviewItem $w={200}>金额:<ReviewDark>5.69亿</ReviewDark></ReviewItem>
        </ReviewStats>
      </Review>

      <DayFrame>
        <Watermark $x={336} $y={108}>东方财富</Watermark>
        <FullSvg width={1060} height={322} viewBox="14 1659 1060 322">
          <g stroke="#e4e4e4" strokeWidth="1.5" strokeDasharray="2 2">
            <line x1="281" x2="281" y1="1659" y2="1983" />
            <line x1="546" x2="546" y1="1659" y2="1983" />
            <line x1="811" x2="811" y1="1659" y2="1983" />
            <line x1="14" x2="1074" y1="1740" y2="1740" />
            <line x1="14" x2="1074" y1="1902" y2="1902" />
          </g>
          <line x1="14" x2="1074" y1="1821" y2="1821" stroke="#8a8a8a" strokeWidth="2" strokeDasharray="11 7" />
          <polyline points={poly(avgLine)} fill="none" stroke="#eeaa3a" strokeWidth="2.4" />
          <polyline points={poly(blueLine)} fill="none" stroke="#3f72b5" strokeWidth="2.6" strokeLinejoin="round" />
        </FullSvg>
        <DayLabel $c="#d92c2c" $y={7}>4.94</DayLabel>
        <DayLabel $c="#999" $y={144}>4.49</DayLabel>
        <DayLabel $c="#0d920d" $y={282}>4.04</DayLabel>
        <DayLabel $c="#d92c2c" $y={7} $right>10.02%</DayLabel>
        <DayLabel $c="#0d920d" $y={282} $right>-10.02%</DayLabel>
      </DayFrame>

      <MacdBar>
        <ToolButton $w={125}>MACD<SmallDown /></ToolButton>
        <Legend $c="#333" $ml={6}>DIF:0.000<Arrow c="#333" down /></Legend>
        <Legend $c="#e8982c" $ml={145}>DEA:0.000<Arrow c="#e8982c" down /></Legend>
        <Legend $c="#cf2fd6" $ml={134}>M:0.000<Arrow c="#cf2fd6" /></Legend>
      </MacdBar>

      <MacdFrame>
        <FullSvg width={gw - 4} height={73} viewBox="14 2045 1060 73">
          <g stroke="#e0e0e0" strokeWidth="1.5" strokeDasharray="2 2">
            <line x1="281" x2="281" y1="2045" y2="2118" />
            <line x1="546" x2="546" y1="2045" y2="2118" />
            <line x1="811" x2="811" y1="2045" y2="2118" />
          </g>
          {macdBars.map(({ x, v }) => (
            <rect
              key={x}
              x={x - 1.6}
              width="3.2"
              y={v > 0 ? 2094 - v : 2094}
              height={Math.abs(v)}
              fill={v > 0 ? "#dc3232" : "#129a12"}
            />
          ))}
          <polyline points={poly(macdOrange)} fill="none" stroke="#e8a74a" strokeWidth="1.5" />
          <polyline points={poly(macdBlack)} fill="none" stroke="#333" strokeWidth="1.2" />
        </FullSvg>
        <MacdLabel $y={6}>0.122</MacdLabel>
        <MacdLabel $y={41}>-0.061</MacdLabel>
      </MacdFrame>

      <TimeRow>
        <span>09:30</span>
        <span>11:30/13:00</span>
        <span>15:00</span>
      </TimeRow>

      <Actions>
        <Action $c={ORANGE}>
          <svg width="18" height="34" viewBox="0 0 18 34" fill="none" stroke="#d9581a" strokeWidth="3" strokeLinecap="round">
            <path d="M15 3L4 17l11 14" />
          </svg>
          前一天
        </Action>
        <Action $c={ORANGE}>
          后一天
          <svg width="18" height="34" viewBox="0 0 18 34" fill="none" stroke="#d9581a" strokeWidth="3" strokeLinecap="round">
            <path d="M3 3l11 14L3 31" />
          </svg>
        </Action>
        <Action $c="#666">关闭</Action>
      </Actions>

      <SysNav>
        <svg width="40" height="46" viewBox="0 0 40 46" fill="none" stroke="#cfcfcf" strokeWidth="4.5" strokeLinejoin="round">
          <path d="M36 3v40L3 23z" />
        </svg>
        <svg width="44" height="46" viewBox="0 0 44 46" fill="none" stroke="#cfcfcf" strokeWidth="4.5">
          <circle cx="22" cy="23" r="20" />
        </svg>
        <svg width="42" height="42" viewBox="0 0 42 42" fill="none" stroke="#cfcfcf" strokeWidth="4.5">
          <rect x="3" y="3" width="36" height="36" rx="3" />
        </svg>
      </SysNav>
    </Page>
  );
}
